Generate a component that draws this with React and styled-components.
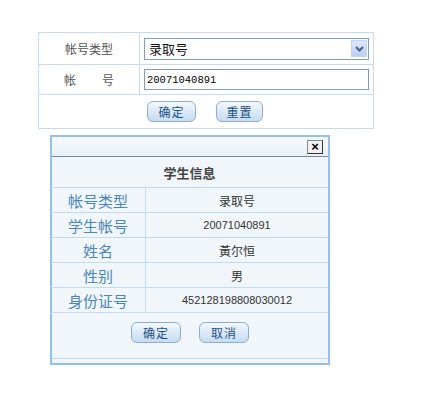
import React from "react";
import styled, { createGlobalStyle } from "styled-components";

const Global = createGlobalStyle`
  html, body { margin: 0; padding: 0; background: #fff; }
  body { font-family: "Noto Sans CJK SC", "Liberation Sans", sans-serif; }
`;

const Page = styled.div`
  padding: 32px 0 0 38px;
  width: 447px;
  height: 399px;
  box-sizing: border-box;
`;

const FormTable = styled.div`
  width: 336px;
  box-sizing: border-box;
  border: 1px solid #c9dbea;
  display: grid;
  grid-template-columns: 101px 1fr;
  grid-template-rows: 32px 30px 33px;
`;

const Label = styled.div`
  display: flex;
  align-items: center;
  justify-content: center;
  gap: ${(p) => p.$gap || 0}px;
  font-size: 12px;
  color: #555;
  border-right: 1px solid #c9dbea;
  border-bottom: 1px solid #c9dbea;
`;

const Field = styled.div`
  display: flex;
  align-items: center;
  padding-left: 4px;
  border-bottom: 1px solid #c9dbea;
`;

const ButtonRow = styled.div`
  grid-column: 1 / span 2;
  display: flex;
  align-items: center;
  justify-content: center;
  gap: ${(p) => p.$gap}px;
  padding-right: 2px;
`;

const Select = styled.div`
  width: 225px;
  height: 22px;
  box-sizing: border-box;
  border: 1px solid #7f9db9;
  display: flex;
  align-items: center;
  justify-content: space-between;
  padding: 0 1px 0 4px;
  font-size: 13px;
  color: #111;
`;

const Arrow = styled.div`
  width: 16px;
  height: 17px;
  background: linear-gradient(#dfe8fb, #bccdf4);
  border: 1px solid #c3d3fd;
  box-sizing: border-box;
  display: flex;
  align-items: center;
  justify-content: center;
`;

const Input = styled.div`
  width: 225px;
  height: 21px;
  box-sizing: border-box;
  border: 1px solid #7f9db9;
  display: flex;
  align-items: center;
  padding-left: 2px;
  font-family: "Liberation Mono", monospace;
  font-size: 10.5px;
  color: #000;
`;

const Btn = styled.div`
  width: ${(p) => p.$w}px;
  height: 21px;
  box-sizing: border-box;
  border: 1px solid #8eaccc;
  border-radius: 6px;
  background: linear-gradient(#f4f9fe 0%, #dbe9f7 50%, #c7dcf1 100%);
  display: flex;
  align-items: center;
  justify-content: center;
  font-size: 12px;
  color: #1d4f86;
  letter-spacing: 1px;
`;

const Dialog = styled.div`
  margin: 6px 0 0 12px;
  width: 280px;
  height: 230px;
  box-sizing: border-box;
  border: 2px solid #92c0e8;
  background: #f1f6fb;
  display: flex;
  flex-direction: column;
`;

const TitleBar = styled.div`
  height: 19px;
  flex: none;
  border-bottom: 1px solid #6d8aa5;
  background: linear-gradient(#f7fafd, #e9f0f8);
  display: flex;
  align-items: center;
  justify-content: flex-end;
  padding-right: 5px;
`;

const Close = styled.div`
  width: 16px;
  height: 14px;
  box-sizing: border-box;
  border: 1px solid #7c8a99;
  border-right-color: #333;
  border-bottom-color: #333;
  background: #f2f2f2;
  display: flex;
  align-items: center;
  justify-content: center;
  font-family: "Liberation Sans", sans-serif;
  font-weight: bold;
  font-size: 13px;
  line-height: 1;
  color: #000;
`;

const InfoTable = styled.div`
  display: grid;
  grid-template-columns: 95px 1fr;
  grid-template-rows: 31px repeat(5, 25px);
  margin: 0 0 0 -1px;
`;

const Header = styled.div`
  grid-column: 1 / span 2;
  display: flex;
  align-items: center;
  justify-content: center;
  font-size: 13px;
  font-weight: bold;
  color: #444;
  border-bottom: 1px solid #c4d9ec;
`;

const InfoLabel = styled.div`
  display: flex;
  align-items: center;
  justify-content: center;
  font-size: 15px;
  color: #4a86ba;
  border-right: 1px solid #c4d9ec;
  border-bottom: 1px solid #c4d9ec;
`;

const InfoValue = styled.div`
  display: flex;
  align-items: center;
  justify-content: center;
  color: #333;
  border-bottom: 1px solid #c4d9ec;
  font-family: ${(p) =>
    p.$num ? '"Liberation Sans", sans-serif' : '"Noto Sans CJK SC", sans-serif'};
  font-size: ${(p) => (p.$num ? 11 : 12)}px;
`;

const DialogButtons = styled.div`
  flex: 1;
  display: flex;
  align-items: center;
  justify-content: center;
  gap: 18px;
  padding-bottom: 6px;
  border-bottom: 1px solid #c4d9ec;
  margin-bottom: 4px;
`;

const rows = [
  ["帐号类型", "录取号"],
  ["学生帐号", "20071040891", true],
  ["姓名", "黃尔恒"],
  ["性别", "男"],
  ["身份证号", "452128198808030012", true],
];

export default function App() {
  return (
    <Page>
      <Global />
      <FormTable>
        <Label>帐号类型</Label>
        <Field>
          <Select>
            <span>录取号</span>
            <Arrow>
              <svg width="9" height="6" viewBox="0 0 9 6">
                <path d="M1 1 L4.5 4.5 L8 1" stroke="#4d6185" strokeWidth="2" fill="none" />
              </svg>
            </Arrow>
          </Select>
        </Field>
        <Label $gap={26}>
          <span>帐</span>
          <span>号</span>
        </Label>
        <Field>
          <Input>20071040891</Input>
        </Field>
        <ButtonRow $gap={20}>
          <Btn $w={49}>确定</Btn>
          <Btn $w={47}>重置</Btn>
        </ButtonRow>
      </FormTable>
      <Dialog>
        <TitleBar>
          <Close>×</Close>
        </TitleBar>
        <InfoTable>
          <Header>学生信息</Header>
          {rows.map(([k, v, num]) => (
            <React.Fragment key={k}>
              <InfoLabel>{k}</InfoLabel>
              <InfoValue $num={num}>{v}</InfoValue>
            </React.Fragment>
          ))}
        </InfoTable>
        <DialogButtons>
          <Btn $w={50}>确定</Btn>
          <Btn $w={50}>取消</Btn>
        </DialogButtons>
      </Dialog>
    </Page>
  );
}
